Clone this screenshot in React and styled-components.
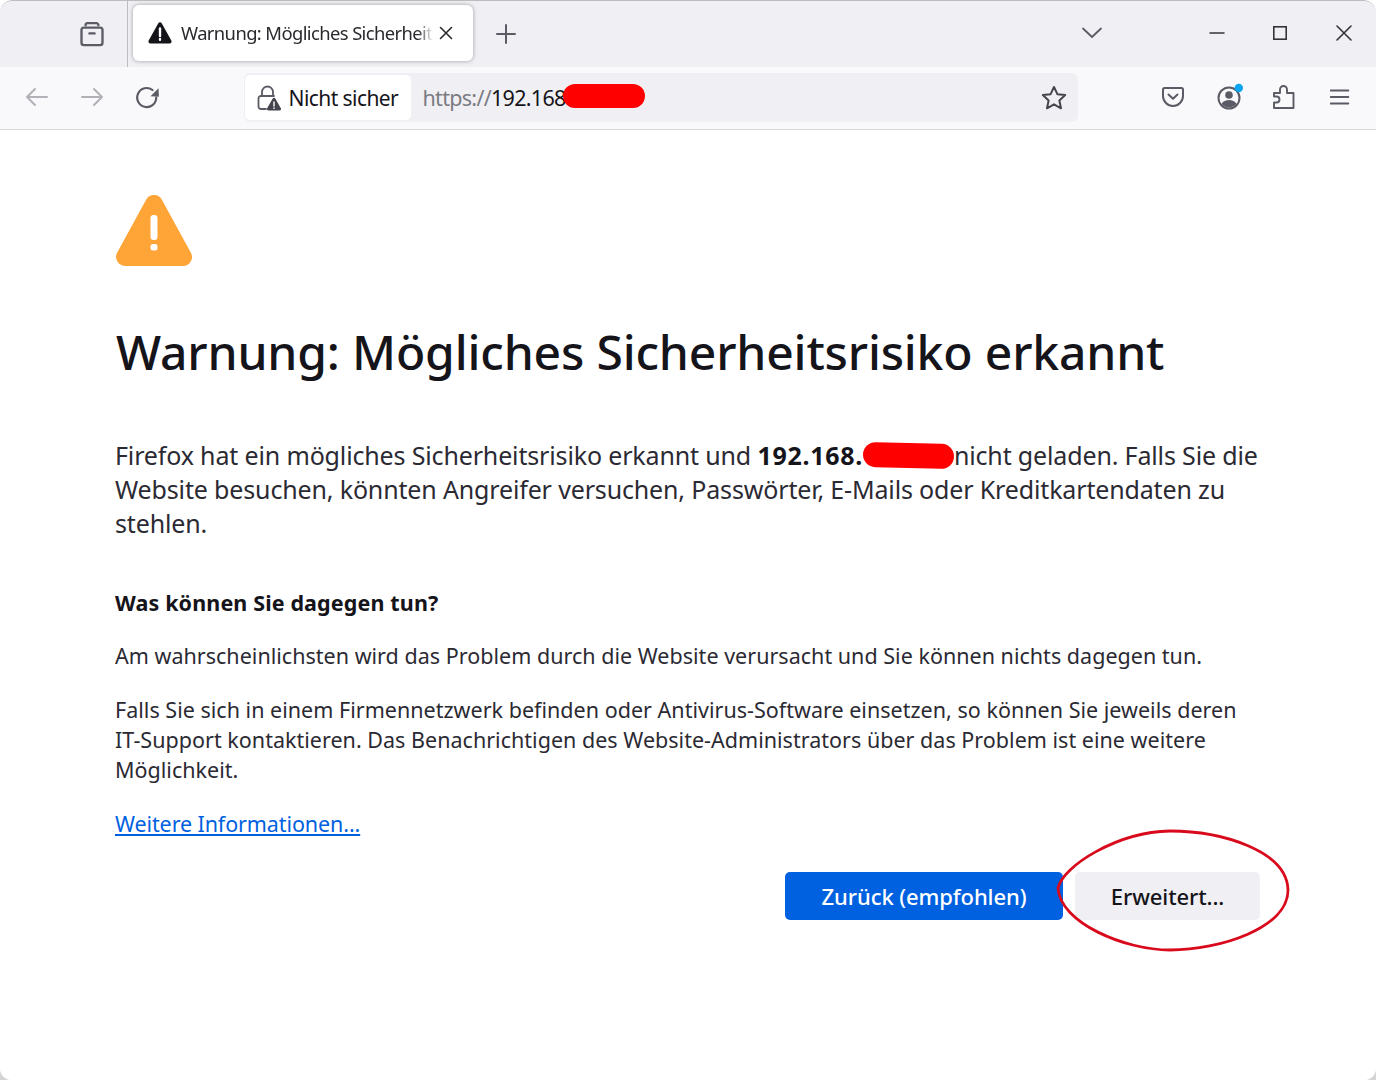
import React from "react";
import styled, { createGlobalStyle } from "styled-components";

const Global = createGlobalStyle`
  html, body { margin: 0; padding: 0; background: linear-gradient(to bottom, #fff 50%, #d4d4d4 50%); }
  body { font-family: "Noto Sans", "Open Sans", sans-serif; color: #15141a; }
  * { box-sizing: border-box; }
`;

const Window = styled.div`
  position: relative;
  width: 1376px;
  height: 1080px;
  background: #fff;
  border-radius: 12px;
  overflow: hidden;
  display: flex;
  flex-direction: column;
`;

const TabStrip = styled.div`
  height: 67px;
  flex: none;
  display: flex;
  align-items: center;
  background: #f0f0f4;
  border-top: 1px solid #bdbdbd;
  border-radius: 12px 12px 0 0;
`;

const ViewsSlot = styled.div`
  width: 128px;
  height: 100%;
  flex: none;
  padding-left: 78px;
  display: flex;
  align-items: center;
  border-right: 1px solid #bcbcc2;
`;

const Tab = styled.div`
  width: 340px;
  height: 56px;
  margin-left: 5px;
  margin-top: -3px;
  padding-left: 15px;
  display: flex;
  align-items: center;
  gap: 9px;
  position: relative;
  background: #fff;
  border-radius: 6px;
  box-shadow: 0 0 4px rgba(0, 0, 0, 0.35);
  flex: none;
`;

const TabTitle = styled.div`
  width: 252px;
  flex: none;
  overflow: hidden;
  white-space: nowrap;
  font-size: 18.4px;
  letter-spacing: -0.6px;
  color: #2a2a2e;
  -webkit-mask-image: linear-gradient(to right, #000 94%, transparent 100%);
  mask-image: linear-gradient(to right, #000 94%, transparent 100%);
`;

const TabClose = styled.span`
  display: flex;
  flex: none;
  margin-left: -4px;
`;

const NewTab = styled.span`
  display: flex;
  margin-left: 22px;
`;

const StripSpacer = styled.div`
  flex: 1;
`;

const CaptionButtons = styled.div`
  display: flex;
  align-items: center;
  margin-top: -3px;
`;

const CaptionSlot = styled.span`
  width: ${(p) => p.$w}px;
  display: flex;
  justify-content: center;
`;

const NavBar = styled.div`
  height: 63px;
  flex: none;
  display: flex;
  align-items: center;
  background: #f9f9fb;
  border-bottom: 1px solid #d8d8dc;
  padding-left: 9px;
`;

const NavSlot = styled.span`
  width: 55.5px;
  flex: none;
  display: flex;
  justify-content: center;
  margin-top: -2px;
`;

const UrlBar = styled.div`
  width: 834px;
  height: 49px;
  margin-left: 68px;
  margin-top: -1px;
  flex: none;
  background: #f0f0f4;
  border-radius: 6px;
  display: flex;
  align-items: center;
  padding: 0 10px 0 1px;
`;

const IdentityBox = styled.div`
  width: 166px;
  height: 45px;
  flex: none;
  background: #fff;
  border-radius: 5px;
  display: flex;
  align-items: center;
  gap: 8px;
  padding-left: 12px;
  font-size: 21px;
  letter-spacing: -0.57px;
  color: #15141a;
`;

const UrlText = styled.div`
  margin-left: 12px;
  flex: 1;
  display: flex;
  align-items: center;
  font-size: 21.5px;
  letter-spacing: -0.7px;
  color: #15141a;
`;

const UrlScheme = styled.span`
  color: #7b7b83;
`;

const UrlRedaction = styled.span`
  display: inline-block;
  width: 82px;
  height: 24px;
  margin-left: -3px;
  margin-top: -3px;
  border-radius: 12px;
  background: #fe0000;
`;

const ToolSlots = styled.div`
  display: flex;
  align-items: center;
  margin-left: 68px;
`;

const ToolSlot = styled.span`
  width: 55.5px;
  display: flex;
  justify-content: center;
  margin-top: -2px;
`;

const Page = styled.main`
  flex: 1;
  padding: 65px 116px 0 115px;
  display: flex;
  flex-direction: column;
  background: #fff;
`;

const WarningIcon = styled.div`
  display: flex;
  height: 72px;
  margin-left: 1px;
`;

const Heading = styled.h1`
  margin: 52px 0 0 1px;
  font-size: 48px;
  line-height: 66px;
  font-weight: 500;
  letter-spacing: -0.17px;
  color: #15141a;
  white-space: nowrap;
`;

const Lead = styled.p`
  margin: 53px -6px 0 0;
  font-size: 25px;
  line-height: 34px;
  letter-spacing: -0.15px;
  color: #2b2a33;
`;

const LeadStrong = styled.strong`
  letter-spacing: 0.7px;
  color: #15141a;
`;

const LeadRedaction = styled.span`
  display: inline-block;
  width: 91px;
  height: 25px;
  vertical-align: -3px;
  border-radius: 13px;
  background: #fe0000;
  transform: rotate(1.5deg);
`;

const SubHeading = styled.h2`
  margin: 48px 0 0;
  font-size: 21.5px;
  line-height: 30px;
  font-weight: 700;
  letter-spacing: 0.13px;
  color: #15141a;
`;

const Body = styled.p`
  margin: ${(p) => p.$top}px 0 0;
  font-size: 21.5px;
  line-height: 30px;
  letter-spacing: 0.02px;
  color: #2b2a33;
`;

const MoreLink = styled.a`
  margin-top: 24px;
  font-size: 21.5px;
  line-height: 30px;
  letter-spacing: -0.1px;
  color: #0061e0;
  text-decoration: underline;
  align-self: flex-start;
`;

const Actions = styled.div`
  margin-top: 33px;
  display: flex;
  justify-content: flex-end;
  gap: 12px;
`;

const Button = styled.button`
  width: ${(p) => p.$w}px;
  height: 48px;
  border: 0;
  border-radius: 5px;
  font-family: inherit;
  font-size: 22px;
  font-weight: 500;
  letter-spacing: -0.1px;
  background: ${(p) => (p.$primary ? "#0061e0" : "#f0f0f4")};
  color: ${(p) => (p.$primary ? "#fff" : "#15141a")};
`;

const Circle = styled.svg`
  position: absolute;
  left: 1055px;
  top: 828px;
  pointer-events: none;
`;

const Stroke = ({ children, w = 2, c = "#5b5b66", s = 28, vb = 24 }) => (
  <svg width={s} height={s} viewBox={`0 0 ${vb} ${vb}`} fill="none" stroke={c} strokeWidth={w} strokeLinecap="round" strokeLinejoin="round">
    {children}
  </svg>
);

export default function App() {
  return (
    <Window>
      <Global />
      <TabStrip>
        <ViewsSlot>
          <Stroke s={28}>
            <path d="M6.5 4.500a1.800 1.800 0 0 1 1.800-1.800h7.400a1.800 1.800 0 0 1 1.800 1.800" />
            <rect x="3" y="6.5" width="18" height="15" rx="2" />
            <path d="M9.8 11.5h4.4" />
          </Stroke>
        </ViewsSlot>
        <Tab>
          <svg width="24" height="24" viewBox="0 0 24 24">
            <path d="M10.3 2.2a2 2 0 0 1 3.4 0l9.6 17.2a2 2 0 0 1-1.7 3H2.4a2 2 0 0 1-1.7-3z" fill="#15141a" />
            <path d="M12 7.5v7.5M12 18v.8" stroke="#fff" strokeWidth="2.4" strokeLinecap="round" />
          </svg>
          <TabTitle>Warnung: Mögliches Sicherheitsrisiko erkannt</TabTitle>
          <TabClose>
            <Stroke s={16} vb={16} c="#2a2a2e" w={1.6}>
              <path d="M2.5 2.5l11 11M13.5 2.5l-11 11" />
            </Stroke>
          </TabClose>
        </Tab>
        <NewTab>
          <Stroke s={22} vb={22} w={2}>
            <path d="M11 2v18M2 11h18" />
          </Stroke>
        </NewTab>
        <StripSpacer />
        <CaptionButtons>
          <CaptionSlot $w={186}>
            <Stroke s={22} vb={22} w={1.8}>
              <path d="M2 6.5l9 8.5 9-8.5" />
            </Stroke>
          </CaptionSlot>
          <CaptionSlot $w={63}>
            <Stroke s={16} vb={16} w={1.5} c="#33333a">
              <path d="M1 8h14" />
            </Stroke>
          </CaptionSlot>
          <CaptionSlot $w={64}>
            <svg width="16" height="16" viewBox="0 0 16 16" fill="none" stroke="#33333a" strokeWidth="1.6">
              <rect x="1.8" y="1.8" width="12.4" height="12.4" />
            </svg>
          </CaptionSlot>
          <CaptionSlot $w={64}>
            <Stroke s={18} vb={18} w={1.6} c="#33333a">
              <path d="M2 2l14 14M16 2L2 16" />
            </Stroke>
          </CaptionSlot>
        </CaptionButtons>
      </TabStrip>
      <NavBar>
        <NavSlot>
          <Stroke s={26} vb={26} w={2} c="#b1b1b8">
            <path d="M23 13H3M11 5l-8 8 8 8" />
          </Stroke>
        </NavSlot>
        <NavSlot>
          <Stroke s={26} vb={26} w={2} c="#b1b1b8">
            <path d="M3 13h20M15 5l8 8-8 8" />
          </Stroke>
        </NavSlot>
        <NavSlot>
          <svg width="26" height="26" viewBox="0 0 26 26" fill="none">
            <path d="M17.500 6A9.500 9.500 0 1 0 21.200 13.700" stroke="#5b5b66" strokeWidth="2.200" strokeLinecap="round" />
            <path d="M23.500 4.200l.4 8.600-8.400-.6z" fill="#5b5b66" />
          </svg>
        </NavSlot>
        <UrlBar>
          <IdentityBox>
            <svg width="24" height="26" viewBox="0 0 24 26" fill="none">
              <path d="M5 11V7a5.5 5.5 0 0 1 11 0v4" stroke="#5b5b66" strokeWidth="1.8" />
              <path d="M9 24H4a2.5 2.5 0 0 1-2.5-2.5v-8A2.5 2.5 0 0 1 4 11h13" stroke="#5b5b66" strokeWidth="1.8" strokeLinecap="round" />
              <path d="M15.7 13.5a1.5 1.5 0 0 1 2.6 0l5.4 9.6a1.5 1.5 0 0 1-1.3 2.4H11.6a1.5 1.5 0 0 1-1.3-2.4z" fill="#44444c" />
              <path d="M17 17v4M17 23v.4" stroke="#fff" strokeWidth="1.4" strokeLinecap="round" />
            </svg>
            Nicht sicher
          </IdentityBox>
          <UrlText>
            <UrlScheme>https://</UrlScheme>192.168
            <UrlRedaction />
          </UrlText>
          <svg width="28" height="28" viewBox="0 0 24 24" fill="none" stroke="#44444c" strokeWidth="1.7" strokeLinejoin="round">
            <path d="M12 2.5l2.9 6.2 6.7.8-5 4.6 1.4 6.7L12 17.4l-6 3.4 1.4-6.7-5-4.6 6.7-.8z" />
          </svg>
        </UrlBar>
        <ToolSlots>
          <ToolSlot>
            <svg width="24" height="24" viewBox="0 0 24 24" fill="none" stroke="#5b5b66" strokeWidth="2" strokeLinecap="round" strokeLinejoin="round">
              <path d="M3.5 3h17a1.5 1.5 0 0 1 1.5 1.5V11a10 10 0 0 1-20 0V4.500A1.500 1.500 0 0 1 3.500 3z" />
              <path d="M7.500 9.500L12 13.800l4.500-4.300" />
            </svg>
          </ToolSlot>
          <ToolSlot>
            <svg width="30" height="30" viewBox="0 0 30 30">
              <circle cx="15" cy="16" r="10.500" fill="none" stroke="#5b5b66" strokeWidth="2" />
              <circle cx="15" cy="13" r="3.800" fill="#5b5b66" />
              <path d="M7.500 22c1.500-3 4.500-4 7.500-4s6 1 7.500 4a10 10 0 0 1-15 0z" fill="#5b5b66" />
              <circle cx="24.800" cy="6" r="4.200" fill="#0aa5f0" />
            </svg>
          </ToolSlot>
          <ToolSlot>
            <svg width="22" height="24" viewBox="0 0 22 24" fill="none" stroke="#5b5b66" strokeWidth="1.900" strokeLinejoin="round">
              <path d="M1 8H7V4.500a3.500 3.500 0 0 1 7 0V8H20.500V23H1V17.500H3.500a3 3 0 0 0 0-6H1z" />
            </svg>
          </ToolSlot>
          <ToolSlot>
            <Stroke s={20} vb={20} w={2}>
              <path d="M.8 3.500h17.500M.8 10h17.500M.8 16.500h17.500" />
            </Stroke>
          </ToolSlot>
        </ToolSlots>
      </NavBar>
      <Page>
        <WarningIcon>
          <svg width="76" height="72" viewBox="0 0 76 72">
            <path d="M38 9L67 62H9Z" fill="#ffa436" stroke="#ffa436" strokeWidth="18" strokeLinejoin="round" />
            <rect x="34.500" y="20" width="7" height="25" rx="3" fill="#fff" />
            <rect x="34.500" y="49" width="7" height="6.500" rx="2.500" fill="#fff" />
          </svg>
        </WarningIcon>
        <Heading>Warnung: Mögliches Sicherheitsrisiko erkannt</Heading>
        <Lead>
          Firefox hat ein mögliches Sicherheitsrisiko erkannt und <LeadStrong>192.168.</LeadStrong>
          <LeadRedaction />nicht geladen. Falls Sie die Website besuchen, könnten Angreifer versuchen, Passwörter, E-Mails oder Kreditkartendaten zu stehlen.
        </Lead>
        <SubHeading>Was können Sie dagegen tun?</SubHeading>
        <Body $top={23}>Am wahrscheinlichsten wird das Problem durch die Website verursacht und Sie können nichts dagegen tun.</Body>
        <Body $top={24}>
          Falls Sie sich in einem Firmennetzwerk befinden oder Antivirus-Software einsetzen, so können Sie jeweils deren IT-Support kontaktieren. Das Benachrichtigen des Website-Administrators über das Problem ist eine weitere Möglichkeit.
        </Body>
        <MoreLink href="#">Weitere Informationen...</MoreLink>
        <Actions>
          <Button $primary $w={278}>Zurück (empfohlen)</Button>
          <Button $w={185}>Erweitert...</Button>
        </Actions>
      </Page>
      <Circle width="238" height="126" viewBox="0 0 238 126" fill="none">
        <path d="M3 60C8 38 62 4 115 3C165 3 232 22 233 62C233 100 165 122 115 122C70 122 5 95 3 60z" stroke="#d90a1c" strokeWidth="2.800" />
      </Circle>
    </Window>
  );
}
